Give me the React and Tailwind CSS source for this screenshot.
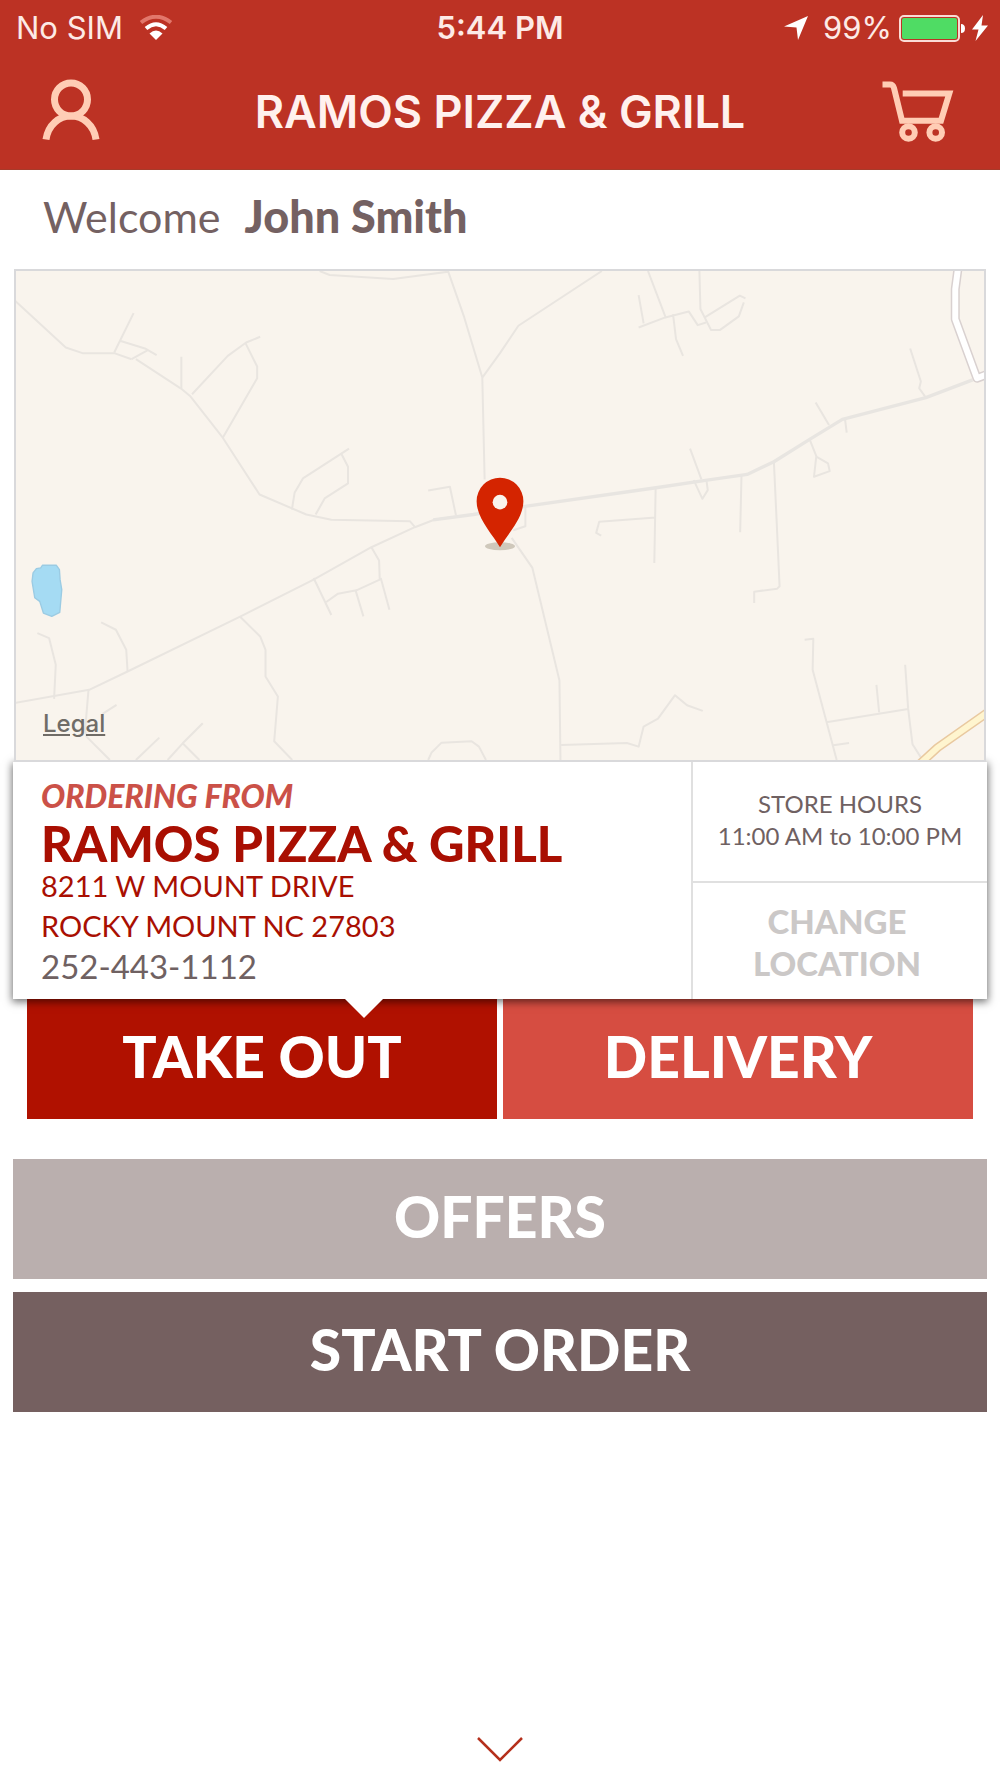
import React from "react";

const localRoads = [
  "M48 125L200 265L250 282H345L397 300M410 300L545 388L572 410L670 535L780 705L920 765L995 781L1230 785L1245 802",
  "M403 162L345 280M362 245L437 268L472 288M447 272L397 300M546 293V388",
  "M578 405L685 290L740 250L782 233M738 252L773 322V357L670 535",
  "M1048 568L910 657L885 700L877 750M1025 583L1045 622V672L975 717L948 765",
  "M960 36L990 48L1180 60L1345 38L1393 175L1447 355L1454 660M1447 355L1500 282L1555 200L1805 36",
  "M1285 693L1350 682L1368 767",
  "M1915 108L1930 193M1915 205L1995 175L2065 157L2092 198L2117 190M1943 36L1997 178M2018 165L2027 240L2048 290",
  "M2097 36L2100 150L2132 213H2158L2215 172L2230 130M2113 175L2218 110L2235 118",
  "M2728 268L2760 367L2755 387L2775 415M2445 430L2485 497M2533 480L2538 520",
  "M2427 540L2447 590L2440 652L2487 635L2482 612L2447 592M2069 568L2103 660M2080 662L2106 718L2122 692L2118 662",
  "M1966 685L1962 910M1966 774L1797 787L1788 820L1803 828M2223 648L2219 818",
  "M2320 607L2328 780L2337 980L2330 987L2261 996V1030",
  "M1576 740V800L1540 812M1535 835L1597 925L1678 1262L1681 1500",
  "M1683 1455L1880 1449L1915 1460L1930 1400L1973 1376L2024 1306L2060 1336L2107 1353",
  "M2412 1140L2438 1137L2436 1230L2508 1500M2477 1387L2722 1347M2627 1275L2635 1357M2713 1215L2722 1347L2735 1453L2765 1500M2498 1456L2545 1449",
  "M942 955L995 1066M980 1027L1015 1002L1070 992L1140 960L1138 903L1115 863M1067 990L1091 1070M1143 955L1169 1050",
  "M722 1071L782 1130L798 1170V1250L835 1310L824 1444L878 1500",
  "M115 1120L150 1135L170 1215L165 1317M306 1088L350 1110L381 1170L385 1235",
  "M268 1290L258 1410L262 1430L332 1500M352 1335L310 1362M480 1433L410 1500M610 1390L550 1450L505 1500M550 1450L600 1500",
  "M1285 1500L1295 1478L1325 1448L1415 1444L1437 1460L1458 1500",
];

function StoreMap() {
  return (
    <svg
      viewBox="48 36 2904 1464"
      preserveAspectRatio="xMidYMid slice"
      className="block h-full w-full"
      role="img"
      aria-label="Map of the store location"
      fill="none"
      strokeLinejoin="round"
    >
      <g stroke="#e9e5e0" strokeWidth="6">
        {localRoads.map((d) => (
          <path key={d} d={d} />
        ))}
        <path d="M48 1329L270 1290L385 1235L722 1071L942 960L1115 863L1245 803L1305 780L1420 765" />
      </g>
      <path
        d="M1300 781L1420 765L1580 740L1967 685L2120 662L2240 645L2320 607L2427 540L2525 480L2775 415L2915 362"
        stroke="#e8e5e1"
        strokeWidth="10"
      />
      <path d="M2871 30L2863 90V180L2928 357L2960 345" stroke="#d9d1d0" strokeWidth="27" />
      <path d="M2871 30L2863 90V180L2928 357L2960 345" stroke="#ffffff" strokeWidth="18" />
      <path d="M2750 1518L2810 1463L2965 1354" stroke="#e9c9a0" strokeWidth="27" />
      <path d="M2750 1518L2810 1463L2965 1354" stroke="#fff5cf" strokeWidth="18" />
      <path
        d="M130 917H172L181 930L183 960L188 990L182 1058L158 1070L133 1060L122 1025L107 1014L99 965L102 940L112 927L125 925Z"
        fill="#a5dbf3"
        stroke="#9bcbe3"
        strokeWidth="4"
      />
      <ellipse cx="1500" cy="860" rx="45" ry="12" fill="#cfc8bb" />
      <path
        d="M1500 863C1476 822 1430 776 1430 725A70 70 0 0 1 1570 725C1570 776 1524 822 1500 863Z"
        fill="#d42400"
      />
      <circle cx="1500" cy="728" r="22" fill="#faf4ed" />
    </svg>
  );
}

function WifiIcon() {
  return (
    <svg viewBox="0 0 34 26" className="h-[26px] w-[34px]" fill="none" aria-hidden="true">
      <path d="M2 7.5Q17 -4 32 7.5" stroke="#e2776b" strokeWidth="4" />
      <path d="M7 13.5Q17 5 27 13.5" stroke="#fff" strokeWidth="4" />
      <path d="M17 25L10.5 18.5Q17 12.5 23.5 18.5Z" fill="#fff" />
    </svg>
  );
}

function StatusBar() {
  return (
    <div className="grid grid-cols-[1fr_auto_1fr] items-center px-4 pt-1 text-[31px] leading-[48px] text-[#fdeae6]">
      <div className="flex items-center gap-4">
        <span>No SIM</span>
        <WifiIcon />
      </div>
      <span className="font-semibold">5:44 PM</span>
      <div className="flex items-center justify-end gap-[7px]">
        <svg viewBox="0 0 24 24" className="mr-2 h-6 w-6" fill="#fff" aria-hidden="true">
          <path d="M24 0L14 24L12.5 11.5L0 10.5Z" />
        </svg>
        <span>99%</span>
        <svg viewBox="0 0 66 27" className="h-[27px] w-[66px]" aria-hidden="true">
          <rect x="1" y="1" width="59" height="25" rx="4" fill="none" stroke="#fbdcd6" strokeWidth="2" />
          <rect x="3" y="3" width="55" height="21" rx="2" fill="#4fdc64" />
          <path d="M62 9Q66 9 66 13.5Q66 18 62 18Z" fill="#fff" />
        </svg>
        <svg viewBox="0 0 16 26" className="-mr-1 h-[26px] w-4" fill="#fff" aria-hidden="true">
          <path d="M11 0L0 14.5H6.5L3.5 26L16 10.5H9.5Z" />
        </svg>
      </div>
    </div>
  );
}

function NavBar() {
  return (
    <div className="grid grid-cols-[84px_1fr_84px] items-center px-9 pt-6 pb-[21px]">
      <button type="button" aria-label="Account">
        <svg viewBox="0 0 84 72" className="block h-[72px] w-[84px]" fill="none" stroke="#ffcdb5" strokeWidth="7" aria-hidden="true">
          <circle cx="35" cy="23.5" r="16.5" />
          <path d="M10 63.5C12 49 23 40 35 40S58 49 60 63.5" />
        </svg>
      </button>
      <h1 className="text-center text-[45px] leading-[72px] font-semibold text-[#fff1ee]">RAMOS PIZZA &amp; GRILL</h1>
      <button type="button" aria-label="Cart">
        <svg viewBox="0 0 84 72" className="block h-[72px] w-[84px]" fill="none" stroke="#ffcdb5" strokeWidth="6" aria-hidden="true">
          <path d="M2.5 8.5H10Q13 8.5 14 12L22 44.7H61L69.3 17.5H22.7" />
          <circle cx="28.5" cy="56.5" r="6.3" />
          <circle cx="55.7" cy="56.5" r="6.3" />
        </svg>
      </button>
    </div>
  );
}

function StoreCard() {
  return (
    <section className="relative mx-[13px] flex bg-white shadow-[0_2px_8px_1px_rgba(0,0,0,0.55)]">
      <div className="flex-1 pt-[14px] pb-[13px] pl-7 text-[29px] leading-10 text-[#a90f02]">
        <p className="text-[32px] leading-10 font-black text-[#cb5148] italic">ORDERING FROM</p>
        <h2 className="mt-[7px] mb-[3px] text-[49px] leading-10 font-black">RAMOS PIZZA &amp; GRILL</h2>
        <p>8211 W MOUNT DRIVE</p>
        <p>ROCKY MOUNT NC 27803</p>
        <p className="text-[33px] leading-10 text-[#6f6162]">252-443-1112</p>
      </div>
      <div className="flex w-[296px] flex-col border-l-2 border-[#e0e0e0]">
        <div className="border-b-2 border-[#e0e0e0] pt-[26px] pb-[29px] text-center text-[24px] leading-8 text-[#6f6162]">
          <p>STORE HOURS</p>
          <p>11:00 AM to 10:00 PM</p>
        </div>
        <button type="button" className="flex-1 pt-[2px] pr-12 pl-[42px] text-[33px] leading-[42px] font-black text-[#cbc8c7]">
          CHANGE LOCATION
        </button>
      </div>
      <svg viewBox="0 0 38 19" className="absolute top-full left-[332px] h-[19px] w-[38px]" aria-hidden="true">
        <path d="M0 0H38L19 19Z" fill="#fff" />
      </svg>
    </section>
  );
}

export default function App() {
  return (
    <div className="flex min-h-screen flex-col bg-white font-['Lato',sans-serif]">
      <header className="border-b border-[#a83a2a] bg-[#bc3224] font-['Inter',sans-serif]">
        <StatusBar />
        <NavBar />
      </header>

      <p className="flex items-baseline gap-6 px-[43px] pt-5 pb-[26px] leading-[52px] text-[#746162]">
        <span className="text-[43px]">Welcome</span>
        <strong className="text-[45px] font-black">John Smith</strong>
      </p>

      <div className="relative z-10 mx-[14px] h-[493px] border-2 border-[#d9d9db] bg-[#f9f4ed]">
        <StoreMap />
        <a href="#legal" className="absolute bottom-5 left-[27px] font-['Inter',sans-serif] text-[24px] leading-8 font-medium text-[#706c67] underline">
          Legal
        </a>
      </div>

      <StoreCard />

      <div className="grid grid-cols-2 gap-[6px] px-[27px] text-[57px] leading-[114px] font-black text-white">
        <button type="button" className="bg-[#b01100] pb-[6px]">TAKE OUT</button>
        <button type="button" className="bg-[#d64d41] pb-[6px]">DELIVERY</button>
      </div>

      <div className="grid gap-[13px] px-[13px] pt-10 text-[57px] leading-[114px] font-black text-white">
        <button type="button" className="bg-[#baafae] pb-[6px]">OFFERS</button>
        <button type="button" className="bg-[#756060] pb-[6px]">START ORDER</button>
      </div>

      <button type="button" aria-label="Show more" className="mx-auto mt-auto p-4">
        <svg viewBox="0 0 46 25" className="block h-[25px] w-[46px]" fill="none" stroke="#b5301c" strokeWidth="2.5" aria-hidden="true">
          <path d="M1 1L23 23L45 1" />
        </svg>
      </button>
    </div>
  );
}
